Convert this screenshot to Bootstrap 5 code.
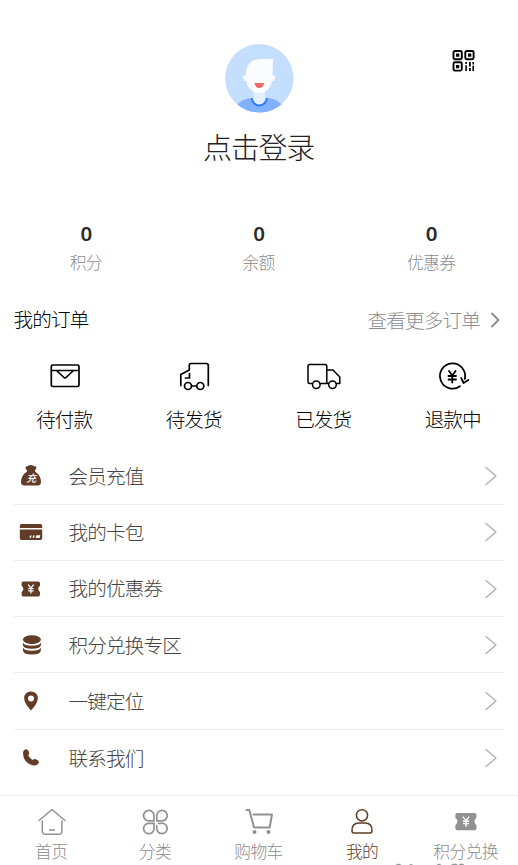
<!DOCTYPE html>
<html lang="zh-CN">
<head>
<meta charset="utf-8">
<meta name="viewport" content="width=device-width, initial-scale=1">
<title>我的</title>
<link href="https://cdn.jsdelivr.net/npm/bootstrap@5.3.0/dist/css/bootstrap.min.css" rel="stylesheet">
<style>
body{font-family:"Noto Sans CJK SC",sans-serif;font-weight:300;color:#000;background:#fff;height:865px;overflow:hidden}
svg{display:block;flex:none}
.page{width:518px;height:865px;overflow:hidden}
.profile{height:214px;padding-top:44px}
.user-name{font-size:29px;letter-spacing:-1.2px;margin-left:-1px;line-height:36px;margin-top:15px;color:#222}
.qr{top:50px;right:43px}
.stat-num{font:600 20.500px/26px "Noto Sans",sans-serif;color:#2b2b2b;padding-top:6px}
.stat-label{font-size:16.8px;letter-spacing:-.6px;line-height:24px;margin-top:4px;margin-left:-1px;color:#8c8c8c}
.stats{height:84px}
.orders-head{height:44px;padding:0 14px 0 13.500px;font-size:19.6px;letter-spacing:-.85px;line-height:42px}
.more{color:#8c8c8c;margin-top:-1px}
.more svg{margin-left:8px;margin-top:1px}
.orders{height:106.7px;font-size:19.6px;letter-spacing:-.85px}
.orders svg{margin-top:16.500px}
.order-text{line-height:28px;margin-top:12.500px;margin-left:-1px}
.menu-row{height:56.2px;border-bottom:1px solid #ececec;margin:0 14px;font-size:19.6px;letter-spacing:-.85px;color:#444}
.menu-row:last-child{border-bottom:0}
.menu-row>span:nth-child(2){margin-top:-1px;margin-left:-.5px}
.menu-icon{width:55px;padding-left:4px;color:#623c27}
.menu-arrow{margin-right:6.500px;color:#aaa}
.tabs{height:70px;border-top:1px solid #ececec;color:#919191;font-size:16.8px;letter-spacing:-.6px}
.tabs svg{margin-top:10px}
.tab-text{line-height:24px;margin-top:1px;margin-left:-1px;color:#8c8c8c}
.current,.current .tab-text{color:#623c27}
.current svg{margin-left:-1px}
.edge-marks{left:393px;bottom:0}
.ln{fill:none;stroke:currentColor;stroke-linecap:round;stroke-linejoin:round}
</style>
</head>
<body>
<svg width="0" height="0" class="position-absolute">
  <symbol id="arrow" viewBox="0 0 14 20"><path class="ln" stroke-width="1.200" d="m2 1.500 10 8.500L2 18.500"/></symbol>
</svg>
<div class="page position-relative d-flex flex-column">
  <header class="profile d-flex flex-column align-items-center">
    <svg width="69" height="69" viewBox="0 0 69 69">
      <clipPath id="disc"><circle cx="34.3" cy="34.3" r="34.2"/></clipPath>
      <g clip-path="url(#disc)"><path fill="#c4deff" d="M0 0h69v69H0z"/>
      <path fill="#82b1ff" d="M10 63Q17 54 28 54h13q11 0 18 9v6H10z"/>
      <path fill="#e4effe" d="M28.500 45h11.500v14H28.500z"/>
      <path d="M26.800 54a7.500 7.500 0 0 0 15 0" fill="#e4effe" stroke="#2d7dff" stroke-width="2"/>
      <path fill="#fafcff" d="M21 31V27Q23 15 36 15h12l-.5 16a3 3 0 1 1-.7 6C46 44 41 49 34.500 49S22 44 21.500 37a3 3 0 1 1-.5-6z"/>
      <path fill="#eb6b65" d="M29.500 39h9.500q-.7 5-4.700 5t-4.800-5z"/></g>
    </svg>
    <div class="user-name">点击登录</div>
    <svg class="qr position-absolute" width="23" height="22" viewBox="0 0 23 22">
      <g fill="none" stroke="#000" stroke-width="1.900"><rect x="1.500" y="1" width="8.300" height="8.300" rx="1.500"/><rect x="13.300" y="1" width="8.300" height="8.300" rx="1.500"/><rect x="1.500" y="12.300" width="8.300" height="8.300" rx="1.500"/></g>
      <path d="M4 3.500h3.300v3.300H4zM16 3.500h3.300v3.300H16zM4 14.900h3.300v3.300H4zM13.300 12h1.600v2h-1.600zM13.300 15.200h1.600V21h-1.600zM17 12h1.800v4.500H17zM17 18h1.800v3H17zM20.400 12H22v2.500h-1.600zM20.400 15.800H22V21h-1.600z"/>
    </svg>
  </header>
  <section class="stats row g-0 text-center">
    <div class="col"><div class="stat-num">0</div><div class="stat-label">积分</div></div>
    <div class="col"><div class="stat-num">0</div><div class="stat-label">余额</div></div>
    <div class="col"><div class="stat-num">0</div><div class="stat-label">优惠券</div></div>
  </section>
  <div class="orders-head d-flex justify-content-between">
    <div>我的订单</div>
    <div class="more d-flex align-items-center">查看更多订单<svg width="16" height="18" viewBox="0 0 16 18"><path class="ln" stroke-width="1.800" d="m4 2.500 6.500 6.500L4 15.500"/></svg></div>
  </div>
  <section class="orders row g-0 text-center">
    <div class="col d-flex flex-column align-items-center"><svg width="36" height="34" viewBox="0 0 36 34"><g class="ln" stroke-width="1.700"><rect x="4.300" y="6" width="27.700" height="21.500" rx="1.500"/><path d="M4.500 11.500h27M10 12l7 6.500q1 1 2 0l7-6.500"/></g></svg><div class="order-text">待付款</div></div>
    <div class="col d-flex flex-column align-items-center"><svg width="36" height="34" viewBox="0 0 36 34"><g class="ln" stroke-width="1.700"><path d="M4.800 26.500V15.500l8.500-4.500V6q0-1.500 1.500-1.500h15.500q2 0 2 2v20M13.500 14.500V19h-4M15.500 27h5"/><circle cx="12" cy="27" r="3.500"/><circle cx="24.300" cy="27" r="3.500"/></g></svg><div class="order-text">待发货</div></div>
    <div class="col d-flex flex-column align-items-center"><svg width="36" height="34" viewBox="0 0 36 34"><g class="ln" stroke-width="1.500"><path d="M6.500 24.500H3.500q-1.500 0-1.500-1.500V7q0-1.500 1.500-1.500h15.800q1.500 0 1.500 1.500v17.500H14M21 11h6l6.800 7v6.500h-3.500M20.500 24.500h2"/><circle cx="10.300" cy="25.700" r="3.800"/><circle cx="26.500" cy="25.700" r="3.800"/></g></svg><div class="order-text">已发货</div></div>
    <div class="col d-flex flex-column align-items-center"><svg width="36" height="34" viewBox="0 0 36 34"><g class="ln" stroke-width="1.800"><path d="M25 27.200A12.600 12.600 0 1 1 29.800 20M26.200 19l2.400 5 4.800-3M14 12l3.300 4.500 3.300-4.500M13.500 17h7.500M13.500 20.500h7.500M17.300 17v6.500"/></g></svg><div class="order-text">退款中</div></div>
  </section>
  <nav class="menu-list">
    <div class="menu-row d-flex align-items-center"><span class="menu-icon"><svg width="26" height="26" viewBox="0 0 26 26"><path fill="currentColor" d="M8 3.500q1.500 0 2.500-1 2-1.200 4.500 0 1 1 3 1 1 1.200-1 4v1q6 4 6 10.500 0 3.500-3.500 3.500h-13Q3 22.500 3 19 3 12.500 9 8.500V7.500Q6.500 4.500 8 3.500z"/><text x="12.800" y="19" text-anchor="middle" font-size="10" font-weight="500" font-style="italic" fill="#fff">充</text></svg></span><span>会员充值</span><svg class="menu-arrow ms-auto" width="14" height="20"><use href="#arrow"/></svg></div>
    <div class="menu-row d-flex align-items-center"><span class="menu-icon"><svg width="26" height="26" viewBox="0 0 26 26"><path fill="currentColor" d="M3.500 5h19q1.700 0 1.700 1.700V9H1.800V6.700Q1.800 5 3.500 5zM1.800 10.500h22.400v8.800q0 1.700-1.700 1.700h-19q-1.700 0-1.700-1.700z"/><path stroke="#fff" stroke-width="1.500" d="m12 18.800 1-2.300M15.200 18.800l1-2.300"/><path fill="#fff" d="M18.500 16.300h3.800l-.8 2.600h-4z"/></svg></span><span>我的卡包</span><svg class="menu-arrow ms-auto" width="14" height="20"><use href="#arrow"/></svg></div>
    <div class="menu-row d-flex align-items-center"><span class="menu-icon"><svg width="26" height="26" viewBox="0 0 26 26"><path id="coupon" fill="currentColor" d="M5.300 5.500h15q1.700 0 1.700 1.700v2.600q-3.600 3.200 0 6.400v2.600q0 1.700-1.700 1.700h-15q-1.700 0-1.700-1.700v-2.600q3.600-3.200 0-6.400V7.200q0-1.700 1.700-1.700z"/><path id="yen" fill="none" stroke="#fff" stroke-width="1.200" d="m10.200 8.700 2.700 3.500 2.700-3.500M10.200 12.700h5.400M10.200 14.800h5.400M12.900 12v5.500"/></svg></span><span>我的优惠券</span><svg class="menu-arrow ms-auto" width="14" height="20"><use href="#arrow"/></svg></div>
    <div class="menu-row d-flex align-items-center"><span class="menu-icon"><svg width="26" height="26" viewBox="0 0 26 26"><g fill="currentColor"><ellipse cx="13.900" cy="7.600" rx="9" ry="4.400"/><path d="M4.900 10.500q1.500 3.200 9 3.200t9-3.200v2.300q0 4-9 4t-9-4zM4.900 15.800q1.500 3 9 3t9-3v2.300q0 4.500-9 4.500t-9-4.500z"/></g></svg></span><span>积分兑换专区</span><svg class="menu-arrow ms-auto" width="14" height="20"><use href="#arrow"/></svg></div>
    <div class="menu-row d-flex align-items-center"><span class="menu-icon"><svg width="26" height="26" viewBox="0 0 26 26"><path fill="currentColor" fill-rule="evenodd" d="M13 3.500q6.800.3 6.800 7 0 4.800-6.800 12-6.800-7.200-6.800-12 0-6.700 6.800-7zm0 4a3 3 0 1 0 0 6 3 3 0 0 0 0-6z"/></svg></span><span>一键定位</span><svg class="menu-arrow ms-auto" width="14" height="20"><use href="#arrow"/></svg></div>
    <div class="menu-row d-flex align-items-center"><span class="menu-icon"><svg width="26" height="26" viewBox="0 0 26 26"><path fill="currentColor" d="M6 5.200q3-2 4.500.8 1.500 2.800-.3 4.300 1.500 3 4.300 4.700 1.500-1.700 4-.5 3 1 2.200 3.500-1.500 3-5.500 2.500Q5.500 18 5 8.500q0-2.500 1-3.300z"/></svg></span><span>联系我们</span><svg class="menu-arrow ms-auto" width="14" height="20"><use href="#arrow"/></svg></div>
  </nav>
  <footer class="tabs row g-0 text-center position-absolute bottom-0 w-100 bg-white">
    <div class="col d-flex flex-column align-items-center"><svg width="30" height="32" viewBox="0 0 30 32"><path class="ln" stroke-width="1.500" d="m2 14.500 13-11 13 11M5.300 15v10q0 3.300 3.300 3.300h13q3.300 0 3.300-3.300V15M12.500 24h5"/></svg><div class="tab-text">首页</div></div>
    <div class="col d-flex flex-column align-items-center"><svg width="30" height="32" viewBox="0 0 30 32"><path class="ln" stroke-width="1.700" d="M14 14.800H9.200A5.200 5.200 0 1 1 14 9.500zM16.800 14.800h4.500a5.200 5.200 0 1 0-4.500-5.300zM14 17.300H9.200a5.200 5.200 0 1 0 4.800 5.300zM18.500 17.300h2.800a5.200 5.200 0 1 1-4.500 5.300v-3"/></svg><div class="tab-text">分类</div></div>
    <div class="col d-flex flex-column align-items-center"><svg width="30" height="32" viewBox="0 0 30 32"><path class="ln" stroke-width="2" d="M2.500 4h2.800l4.800 17.500h15.500L28 8.500H9.500"/><g fill="currentColor"><circle cx="10.500" cy="26" r="2"/><circle cx="24.500" cy="26" r="2"/></g></svg><div class="tab-text">购物车</div></div>
    <div class="col current d-flex flex-column align-items-center"><svg width="30" height="32" viewBox="0 0 30 32"><g class="ln" stroke-width="1.500"><circle cx="15" cy="9.300" r="5.600"/><path d="M5 24.500q0-7.500 7-7.500h6q7 0 7 7.500 0 2.500-2 2.500H7q-2 0-2-2.500z"/></g></svg><div class="tab-text">我的</div></div>
    <div class="col d-flex flex-column align-items-center"><svg width="30" height="32" viewBox="0 0 30 32"><g transform="translate(.2 .6) scale(1.150 1.150)"><use href="#coupon"/><use href="#yen"/></g></svg><div class="tab-text">积分兑换</div></div>
  </footer>
  <svg class="edge-marks position-absolute" width="76" height="2" viewBox="0 0 76 2"><g fill="#999"><ellipse cx="5.500" cy="2" rx="2.500" ry="1.300"/><ellipse cx="18" cy="2" rx="1.700" ry="1"/><ellipse cx="46" cy="2" rx="2" ry="1.200"/><ellipse cx="61.500" cy="2" rx="3" ry="1.500"/><ellipse cx="68.500" cy="2" rx="2.700" ry="1.500"/></g></svg>
</div>
<script src="https://cdn.jsdelivr.net/npm/bootstrap@5.3.0/dist/js/bootstrap.bundle.min.js"></script>
</body>
</html>
